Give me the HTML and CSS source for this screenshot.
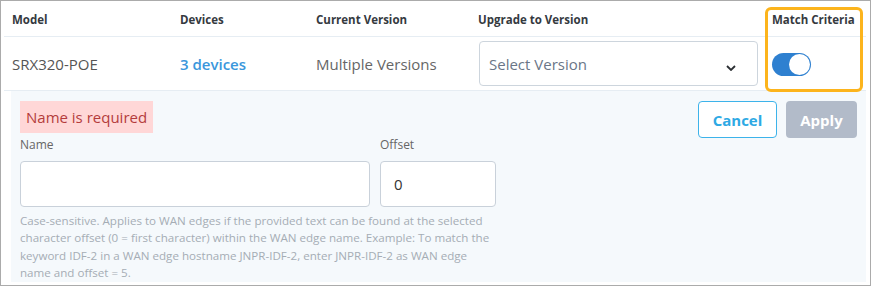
FILE: index.html
```html
<!DOCTYPE html>
<html lang="en">
<head>
    <meta charset="UTF-8">
    <meta name="viewport" content="width=device-width, initial-scale=1.0">
    <title>Upgrade Devices</title>
    <link rel="stylesheet" href="styles.css">
</head>
<body>
    <div class="frame">
        <div class="table">
            <div class="row head">
                <div class="cell">Model</div>
                <div class="cell">Devices</div>
                <div class="cell">Current Version</div>
                <div class="cell">Upgrade to Version</div>
                <div class="cell">Match Criteria</div>
            </div>
            <div class="row body">
                <div class="cell model">SRX320-POE</div>
                <div class="cell"><a class="devices" href="#">3 devices</a></div>
                <div class="cell muted">Multiple Versions</div>
                <div class="cell">
                    <div class="select">
                        <span>Select Version</span>
                        <svg class="chevron" width="10" height="6" viewBox="0 0 10 6">
                            <path d="M1 1 L5 5 L9 1" fill="none" stroke="#2b2f33" stroke-width="1.8"/>
                        </svg>
                    </div>
                </div>
                <div class="cell">
                    <div class="toggle on"><div class="knob"></div></div>
                </div>
            </div>
            <div class="highlight"></div>
        </div>

        <div class="panel">
            <div class="form">
                <div class="error">Name is required</div>
                <div class="fields">
                    <div class="field">
                        <label>Name</label>
                        <input class="input name-input" type="text">
                    </div>
                    <div class="field">
                        <label>Offset</label>
                        <input class="input offset-input" type="text" value="0">
                    </div>
                </div>
                <p class="help">Case-sensitive. Applies to WAN edges if the provided text can be found at the selected<br>
                    character offset (0 = first character) within the WAN edge name. Example: To match the<br>
                    keyword IDF-2 in a WAN edge hostname JNPR-IDF-2, enter JNPR-IDF-2 as WAN edge<br>
                    name and offset = 5.</p>
            </div>
            <div class="actions">
                <button class="btn cancel">Cancel</button>
                <button class="btn apply" disabled>Apply</button>
            </div>
        </div>
    </div>
</body>
</html>
```

FILE: styles.css
```css
* {
    margin: 0;
    padding: 0;
    box-sizing: border-box;
}

body {
    font-family: "Open Sans", "Noto Sans", sans-serif;
    background: white;
    color: #333;
}

.frame {
    width: 871px;
    height: 286px;
    border: 1px solid #ababab;
    background: white;
    overflow: hidden;
}

.table {
    position: relative;
    margin: 0 4px 0 3px;
}

.row {
    display: grid;
    grid-template-columns: 168px 136px 162px 294px 1fr;
    padding-left: 8px;
    border-bottom: 1px solid #e6edf3;
}

.row.head {
    height: 36px;
    padding-top: 11px;
    font-size: 11.5px;
    line-height: 16px;
    font-weight: 700;
    color: #353a3f;
}

.row.body {
    height: 54px;
    align-items: center;
    font-size: 15px;
    line-height: 20px;
}

.model {
    color: #555;
}

.devices {
    color: #3a97dc;
    font-weight: 600;
    text-decoration: none;
}

.muted {
    color: #666;
}

.select {
    width: 279px;
    height: 45px;
    margin-left: 1px;
    border: 1px solid #cdd5dd;
    border-radius: 4px;
    background: white;
    display: flex;
    align-items: center;
    justify-content: space-between;
    padding: 0 21px 0 9px;
    color: #6a7687;
}

.chevron {
    margin-top: 8px;
}

.toggle {
    width: 39px;
    height: 23px;
    border-radius: 12px;
    background: #2e80d0;
    padding: 1px;
    display: flex;
    justify-content: flex-end;
    margin-top: 1px;
}

.knob {
    width: 21px;
    height: 21px;
    border-radius: 50%;
    background: white;
}

.highlight {
    position: absolute;
    left: 761px;
    top: 6px;
    width: 98px;
    height: 85px;
    border: 3px solid #fcb41c;
    border-radius: 6px;
}

.panel {
    margin: 0 4px 0 10px;
    background: #f5f9fc;
    display: flex;
    justify-content: space-between;
    padding: 10px 9px 0 9px;
}

.error {
    display: inline-block;
    height: 32px;
    line-height: 32px;
    padding: 0 6px;
    background: #ffd7d7;
    color: #b43c3c;
    font-size: 15px;
}

.fields {
    display: flex;
    gap: 10px;
    margin-top: 4px;
}

.field label {
    display: block;
    font-size: 12px;
    line-height: 16px;
    color: #666;
    margin-bottom: 8px;
}

.input {
    height: 46px;
    border: 1px solid #c9d1da;
    border-radius: 4px;
    background: white;
    font-family: inherit;
    font-size: 15px;
    color: #333;
    padding: 0 13px;
    outline: none;
}

.name-input {
    width: 350px;
}

.offset-input {
    width: 116px;
}

.help {
    white-space: nowrap;
    margin-top: 5px;
    font-size: 11.6px;
    line-height: 17.4px;
    color: #a5adb5;
}

.actions {
    display: flex;
    gap: 9px;
    align-items: flex-start;
}

.btn {
    height: 37px;
    border-radius: 4px;
    font-family: inherit;
    font-size: 15px;
    font-weight: 700;
    cursor: pointer;
}

.cancel {
    width: 79px;
    border: 1px solid #3db3ea;
    background: white;
    color: #2ea9e4;
}

.apply {
    width: 71px;
    border: none;
    background: #b2bbc9;
    color: white;
    cursor: not-allowed;
}
```
